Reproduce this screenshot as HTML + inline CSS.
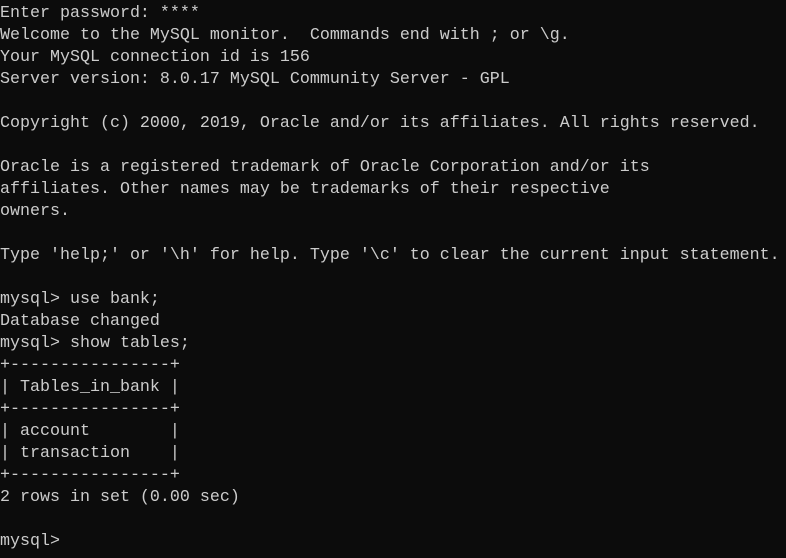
<!DOCTYPE html>
<html><head><meta charset="utf-8"><style>
html,body{margin:0;padding:0;background:#0c0c0c;width:786px;height:558px;overflow:hidden}
pre{margin:0;padding:3px 0 0 0;font-family:"Liberation Mono",monospace;font-size:16.67px;line-height:22px;color:#cccccc;white-space:pre}
</style></head><body><pre>Enter password: ****
Welcome to the MySQL monitor.  Commands end with ; or \g.
Your MySQL connection id is 156
Server version: 8.0.17 MySQL Community Server - GPL

Copyright (c) 2000, 2019, Oracle and/or its affiliates. All rights reserved.

Oracle is a registered trademark of Oracle Corporation and/or its
affiliates. Other names may be trademarks of their respective
owners.

Type 'help;' or '\h' for help. Type '\c' to clear the current input statement.

mysql&gt; use bank;
Database changed
mysql&gt; show tables;
+----------------+
| Tables_in_bank |
+----------------+
| account        |
| transaction    |
+----------------+
2 rows in set (0.00 sec)

mysql&gt;</pre></body></html>
